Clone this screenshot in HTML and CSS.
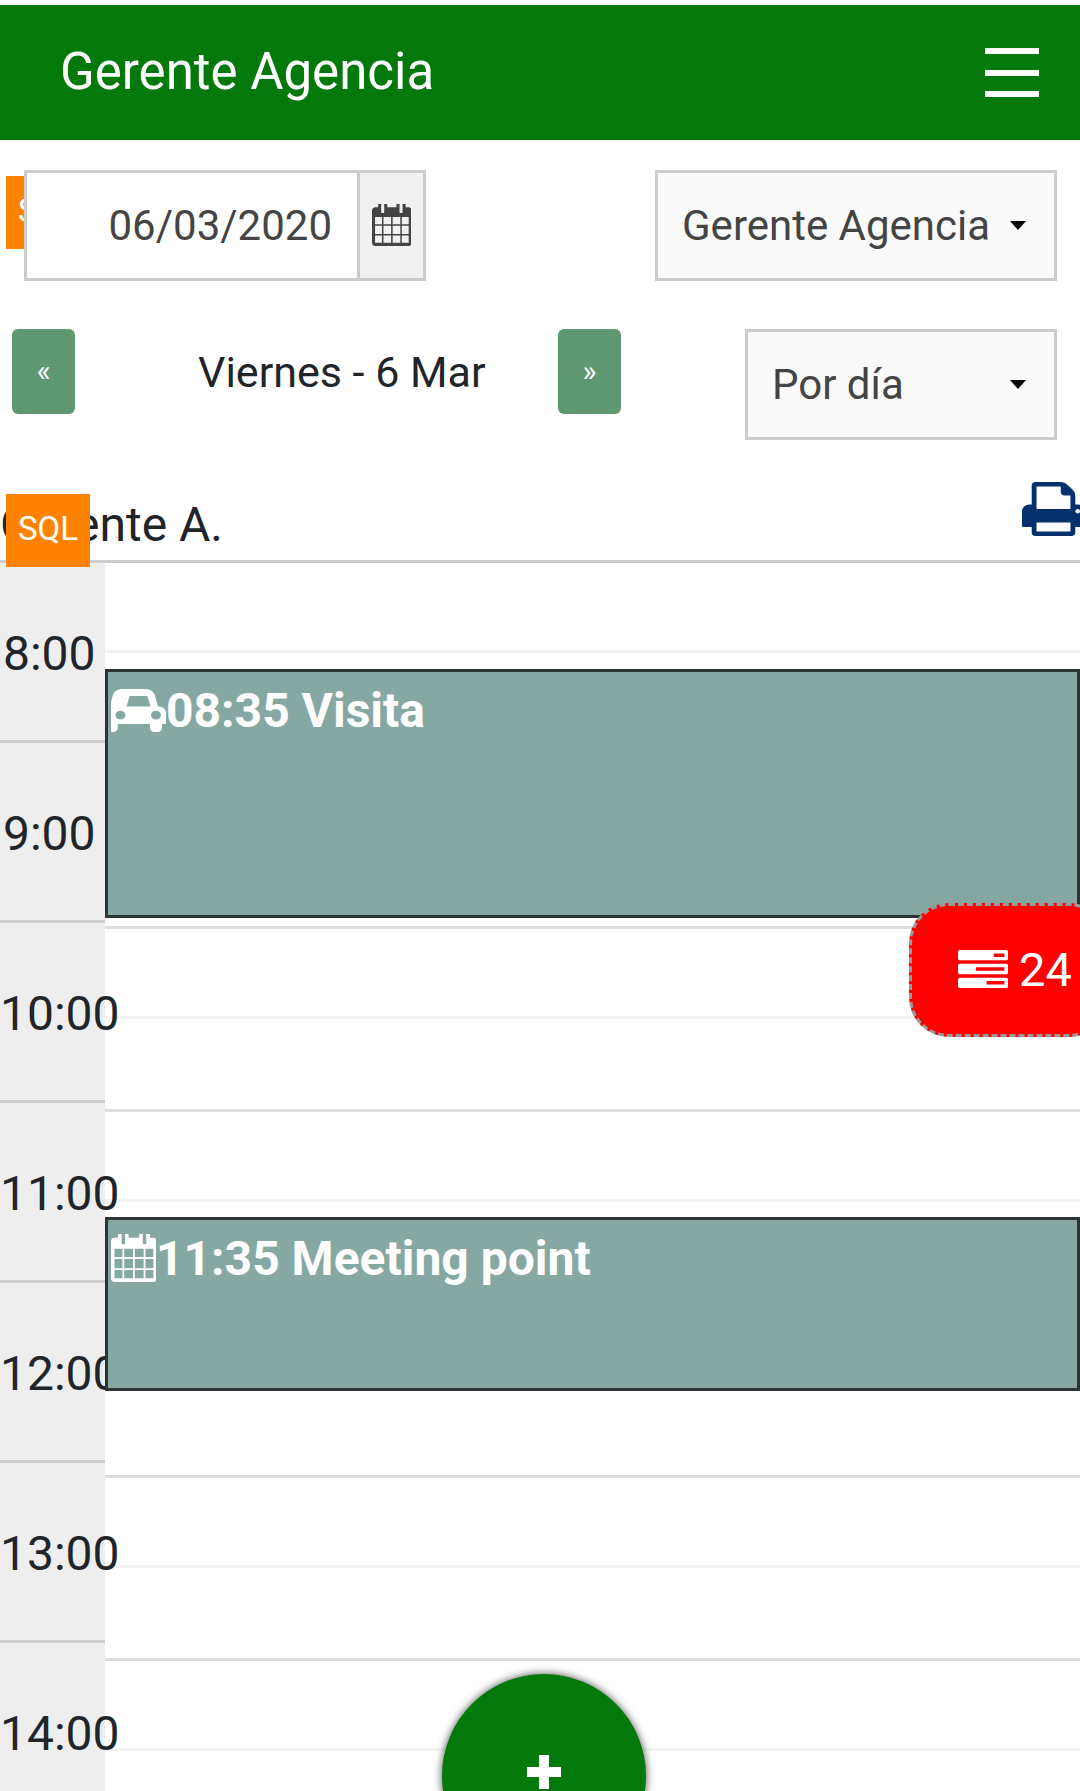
FILE: index.html
```html
<!DOCTYPE html>
<html lang="es">
<head>
<meta charset="utf-8">
<title>Gerente Agencia</title>
<link rel="stylesheet" href="styles.css">
</head>
<body>
<div class="page">
  <header class="topbar">
    <span class="brand">Gerente Agencia</span>
    <span class="burger"><i></i><i></i><i></i></span>
  </header>

  <span class="sql sql-back">SQL</span>
  <section class="filters">
    <div class="date-group">
      <div class="date-input">06/03/2020</div>
      <div class="date-addon">
        <svg class="ico-date" viewBox="64 128 1632 1664" preserveAspectRatio="none"><use href="#cal" width="1792" height="1792"/></svg>
      </div>
    </div>
    <div class="select select-user"><span>Gerente Agencia</span><b class="caret"></b></div>
  </section>

  <section class="nav-row">
    <a class="pager">«</a>
    <span class="day-title">Viernes - 6 Mar</span>
    <a class="pager">»</a>
    <div class="select select-view"><span>Por día</span><b class="caret"></b></div>
  </section>

  <section class="owner-row">
    <span class="owner">Gerente A.</span>
    <svg class="ico-print" viewBox="64 128 1664 1536" preserveAspectRatio="none"><path d="M448 1536h896v-256h-896v256zm0-640h896v-384h-160q-40 0-68-28t-28-68v-160h-640v640zm1152 64q0-26-19-45t-45-19-45 19-19 45 19 45 45 19 45-19 19-45zm128 0v416q0 13-9.5 22.5t-22.5 9.5h-224v160q0 40-28 68t-68 28h-960q-40 0-68-28t-28-68v-160h-224q-13 0-22.5-9.5t-9.5-22.5v-416q0-79 56.5-135.5t135.5-56.5h64v-544q0-40 28-68t68-28h672q40 0 88 20t76 48l152 152q28 28 48 76t20 88v256h64q79 0 135.5 56.5t56.5 135.5z"/></svg>
  </section>
  <span class="sql sql-front">SQL</span>

  <main class="calendar">
    <div class="hours">
      <div class="hour">8:00</div>
      <div class="hour">9:00</div>
      <div class="hour wide">10:00</div>
      <div class="hour wide">11:00</div>
      <div class="hour wide">12:00</div>
      <div class="hour wide">13:00</div>
      <div class="hour wide">14:00</div>
    </div>
    <div class="day">
      <div class="slot"></div>
      <div class="slot"></div>
      <div class="slot"></div>
      <div class="slot"></div>
      <div class="slot"></div>
      <div class="slot"></div>
      <div class="slot"></div>
      <article class="event event-visit">
        <svg class="ico-car" viewBox="20 128 1752 1577" preserveAspectRatio="none"><path d="M480 1088q0-66-47-113t-113-47-113 47-47 113 47 113 113 47 113-47 47-113zm36-320h760l-89-357q-2-8-14-17.5t-21-9.5h-512q-9 0-21 9.5t-14 17.5zm1096 320q0-66-47-113t-113-47-113 47-47 113 47 113 113 47 113-47 47-113zm160-96v384q0 14-9 23t-23 9h-96v128q0 80-56 136t-136 56-136-56-56-136v-128h-1024v128q0 80-56 136t-136 56-136-56-56-136v-128h-96q-14 0-23-9t-9-23v-384q0-93 65.5-158.5t158.5-65.5h28l105-419q23-94 104-157.5t179-63.5h768q98 0 179 63.5t104 157.5l105 419h28q93 0 158.5 65.5t65.5 158.5z"/></svg>
        <span>08:35 Visita</span>
      </article>
      <article class="event event-meeting">
        <svg class="ico-cal" viewBox="64 128 1632 1664" preserveAspectRatio="none"><use href="#cal" width="1792" height="1792"/></svg>
        <span>11:35 Meeting point</span>
      </article>
    </div>
  </main>

  <aside class="alert-tab">
    <svg class="ico-tasks" viewBox="0 128 1792 1408" preserveAspectRatio="none"><path d="M1024 1408h640v-128h-640v128zm-384-512h1024v-128h-1024v128zm640-512h384v-128h-384v128zm512 832v256q0 26-19 45t-45 19h-1664q-26 0-45-19t-19-45v-256q0-26 19-45t45-19h1664q26 0 45 19t19 45zm0-512v256q0 26-19 45t-45 19h-1664q-26 0-45-19t-19-45v-256q0-26 19-45t45-19h1664q26 0 45 19t19 45zm0-512v256q0 26-19 45t-45 19h-1664q-26 0-45-19t-19-45v-256q0-26 19-45t45-19h1664q26 0 45 19t19 45z"/></svg>
    <span>24</span>
  </aside>

  <button class="fab"><svg class="ico-plus" viewBox="0 0 34 34"><path d="M12 0h10v12h12v10H22v12H12V22H0V12h12z"/></svg></button>
</div>

<svg class="defs" aria-hidden="true">
  <symbol id="cal" viewBox="0 0 1792 1792" overflow="visible">
    <path d="M192 1664h288v-288h-288v288zm352 0h320v-288h-320v288zm-352-352h288v-320h-288v320zm352 0h320v-320h-320v320zm-352-384h288v-288h-288v288zm736 736h320v-288h-320v288zm-384-736h320v-288h-320v288zm768 736h288v-288h-288v288zm-384-352h320v-320h-320v320zm-352-864v-288q0-13-9.5-22.5t-22.5-9.5h-64q-13 0-22.5 9.5t-9.5 22.5v288q0 13 9.5 22.5t22.5 9.5h64q13 0 22.5-9.5t9.5-22.5zm736 864h288v-320h-288v320zm-384-384h320v-288h-320v288zm384 0h288v-288h-288v288zm32-480v-288q0-13-9.5-22.5t-22.5-9.5h-64q-13 0-22.5 9.5t-9.5 22.5v288q0 13 9.5 22.5t22.5 9.5h64q13 0 22.5-9.5t9.5-22.5zm384-64v1280q0 52-38 90t-90 38h-1408q-52 0-90-38t-38-90v-1280q0-52 38-90t90-38h128v-96q0-66 47-113t113-47h64q66 0 113 47t47 113v96h384v-96q0-66 47-113t113-47h64q66 0 113 47t47 113v96h128q52 0 90 38t38 90z"/>
  </symbol>
</svg>
</body>
</html>
```

FILE: styles.css
```css
* { box-sizing: border-box; }
html, body { margin: 0; padding: 0; height: 1791px; overflow: hidden; background: #fff; }
body { font-family: Roboto, "Liberation Sans", sans-serif; color: #212529; font-size: 42px; }
.page { position: relative; width: 1080px; height: 1791px; overflow: hidden; padding-top: 5px; }
.defs { position: absolute; width: 0; height: 0; }

.topbar { height: 135px; background: #04790b; color: #fff; display: flex; align-items: center; justify-content: space-between; padding: 0 41px 0 60px; }
.brand { font-size: 51px; position: relative; top: -1px; }
.burger { display: flex; flex-direction: column; gap: 15.5px; width: 54px; }
.burger i { display: block; height: 6px; background: #fff; }

.sql { position: absolute; left: 6px; width: 84px; height: 73px; padding-bottom: 4px; background: #ff8300; color: #fff; font-size: 33px; display: flex; align-items: center; justify-content: center; }
.sql-back { top: 176px; }
.sql-front { top: 494px; z-index: 3; }

.filters { display: flex; justify-content: space-between; padding: 30px 23.5px 0 24px; position: relative; z-index: 1; }
.date-group { display: flex; height: 110.5px; width: 402px; border: 3px solid #ccc; background: #fff; color: #444; }
.date-input { flex: 1; display: flex; align-items: center; justify-content: flex-end; padding-right: 25px; font-size: 42px; }
.date-addon { width: 66px; flex: none; background: #f1f1f1; border-left: 3px solid #ccc; display: flex; align-items: center; justify-content: center; }
.ico-date { width: 39px; height: 42px; fill: #444; }

.select { display: flex; align-items: center; justify-content: space-between; height: 110.5px; border: 3px solid #ccc; background: #fafafa; color: #444; padding: 0 28px 0 24px; }
.select-user { width: 401.5px; }
.select-view { width: 311.5px; margin-left: auto; }
.caret { width: 0; height: 0; border-left: 8.5px solid transparent; border-right: 8.5px solid transparent; border-top: 9px solid #000; }

.nav-row { display: flex; align-items: flex-start; padding: 48.5px 23.5px 0 12px; }
.pager { width: 63px; height: 85px; background: #5f9770; border-radius: 6px; color: #fff; font-size: 30px; display: flex; align-items: center; justify-content: center; padding-bottom: 3px; }
.day-title { height: 85px; line-height: 87px; padding-left: 123px; width: 483px; font-size: 43px; }

.owner-row { height: 123px; display: flex; align-items: flex-start; justify-content: space-between; border-bottom: 3px solid #ccc; }
.owner { font-size: 48px; line-height: 56px; margin-top: 57px; padding-left: 0; }
.ico-print { width: 63px; height: 54px; fill: #03316b; margin-top: 42px; margin-right: -5px; flex: none; }

.calendar { display: flex; align-items: flex-start; }
.hours { width: 105px; flex: none; background: #eee; position: relative; z-index: 1; }
.hour { height: 180px; border-bottom: 3px solid #ccc; padding: 63px 0 0 3px; font-size: 48px; line-height: 56px; white-space: nowrap; }
.hour.wide { padding-left: 0; }
.day { flex: 1; position: relative; }
.slot { height: 183px; border-bottom: 3px solid #ddd; }
.slot::before { content: ""; display: block; height: 87.5px; border-bottom: 3px solid #f3f3f3; }

.event { position: absolute; left: 0; right: 0; z-index: 2; background: #86a8a3; border: 3px solid #2d3436; padding: 12px 0 0 3px; display: flex; align-items: flex-start; color: #fff; font-size: 48px; font-weight: 700; line-height: 54px; }
.event-visit { top: 106px; height: 249px; }
.event-meeting { top: 654px; height: 174px; }
.ico-car { width: 55px; height: 43px; fill: #fff; flex: none; margin-top: 5px; }
.ico-cal { width: 45px; height: 48px; fill: #fff; flex: none; margin-top: 2px; }

.alert-tab { position: absolute; left: 909px; top: 903px; width: 200px; height: 134px; z-index: 4; background: #f00; border: 3px dashed #999; border-radius: 40px; color: #fff; display: flex; align-items: center; padding: 0 0 2px 46px; font-size: 47px; font-weight: 400; }
.ico-tasks { width: 50px; height: 38px; fill: #fff; margin-right: 11px; flex: none; }

.fab { position: absolute; left: 442px; top: 1674px; width: 204px; height: 204px; border: 0; padding: 81px 0 0; border-radius: 50%; background: #04790b; box-shadow: 0 0 8px rgba(0,0,0,.7); z-index: 5; display: flex; justify-content: center; align-items: flex-start; }
.ico-plus { width: 34px; height: 34px; fill: #fff; }
```
